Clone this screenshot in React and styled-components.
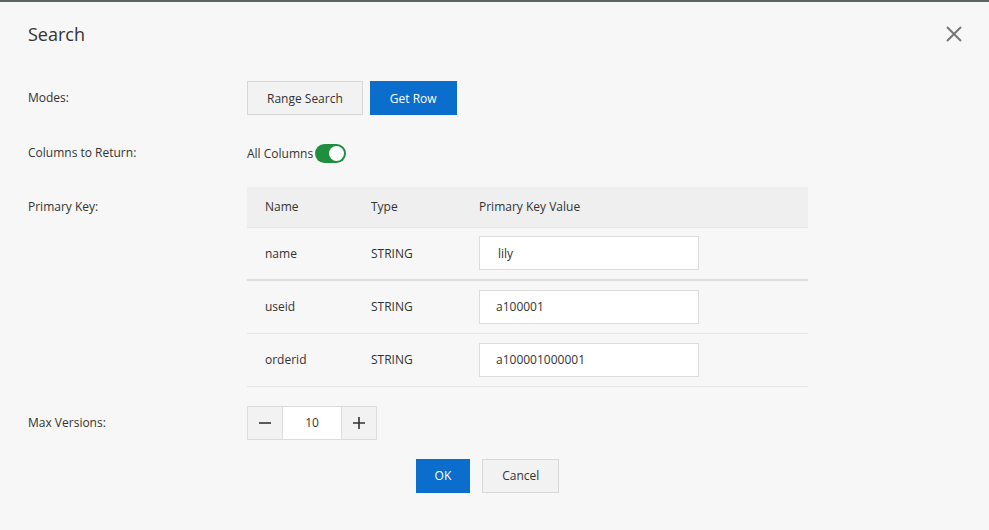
import React, { useState } from 'react';
import styled, { createGlobalStyle } from 'styled-components';

const GlobalStyle = createGlobalStyle`
  html, body {
    margin: 0;
    padding: 0;
    background: #f7f7f7;
    font-family: "Open Sans", "Noto Sans", sans-serif;
    font-size: 12px;
    color: #333;
  }
  * { box-sizing: border-box; }
`;

const rows = [
  { name: 'name', type: 'STRING', value: 'lily' },
  { name: 'useid', type: 'STRING', value: 'a100001' },
  { name: 'orderid', type: 'STRING', value: 'a100001000001' },
];

const App = () => {
  const [mode, setMode] = useState('get');
  const [allColumns, setAllColumns] = useState(true);
  const [versions, setVersions] = useState(10);

  return (
    <>
      <GlobalStyle />
      <Dialog>
        <Header>
          <Title>Search</Title>
          <Close aria-label="close">
            <svg width="18" height="18" viewBox="0 0 18 18">
              <path d="M2 2 L16 16 M16 2 L2 16" stroke="#777" strokeWidth="2" fill="none" />
            </svg>
          </Close>
        </Header>

        <Form>
          <FormRow $mt={0}>
            <Label>Modes:</Label>
            <Modes>
              <ModeButton $active={mode === 'range'} onClick={() => setMode('range')}>Range Search</ModeButton>
              <ModeButton $active={mode === 'get'} onClick={() => setMode('get')}>Get Row</ModeButton>
            </Modes>
          </FormRow>

          <FormRow $mt={21}>
            <Label>Columns to Return:</Label>
            <SwitchRow>
              All Columns
              <Switch $on={allColumns} onClick={() => setAllColumns(!allColumns)}>
                <Knob $on={allColumns} />
              </Switch>
            </SwitchRow>
          </FormRow>

          <FormRow $mt={17}>
            <Label $lh={40}>Primary Key:</Label>
            <Table>
              <thead>
                <tr>
                  <Th $w={106}>Name</Th>
                  <Th $w={108}>Type</Th>
                  <Th>Primary Key Value</Th>
                </tr>
              </thead>
              <tbody>
                {rows.map((r, i) => (
                  <Tr key={r.name} $thick={i === 0}>
                    <Td>{r.name}</Td>
                    <Td>{r.type}</Td>
                    <Td>
                      <ValueInput defaultValue={r.value} $first={i === 0} />
                    </Td>
                  </Tr>
                ))}
              </tbody>
            </Table>
          </FormRow>

          <FormRow $mt={19}>
            <Label>Max Versions:</Label>
            <Stepper>
              <StepButton onClick={() => setVersions(versions - 1)}>
                <svg width="14" height="14" viewBox="0 0 14 14">
                  <path d="M1 7 H13" stroke="#333" strokeWidth="1.6" />
                </svg>
              </StepButton>
              <StepValue value={versions} onChange={(e) => setVersions(e.target.value)} />
              <StepButton onClick={() => setVersions(versions + 1)}>
                <svg width="14" height="14" viewBox="0 0 14 14">
                  <path d="M1 7 H13 M7 1 V13" stroke="#333" strokeWidth="1.6" />
                </svg>
              </StepButton>
            </Stepper>
          </FormRow>
        </Form>

        <Footer>
          <FooterButton $primary>OK</FooterButton>
          <FooterButton>Cancel</FooterButton>
        </Footer>
      </Dialog>
    </>
  );
};

export default App;

const Dialog = styled.div`
  width: 989px;
  height: 530px;
  background: #f7f7f7;
  border-top: 2px solid #5e6661;
`;

const Header = styled.div`
  display: flex;
  justify-content: space-between;
  align-items: flex-start;
  padding: 20px 26px 0 28px;
  height: 62px;
`;

const Title = styled.h2`
  margin: 0;
  font-weight: 400;
  font-size: 18px;
  line-height: 24px;
  color: #333;
`;

const Close = styled.div`
  width: 18px;
  height: 18px;
  margin-top: 3px;
  cursor: pointer;
`;

const Form = styled.div`
  display: flex;
  flex-direction: column;
  padding: 17px 0 0 28px;
`;

const FormRow = styled.div`
  display: grid;
  grid-template-columns: 219px 561px;
  align-items: start;
  margin-top: ${(p) => p.$mt}px;
`;

const Label = styled.div`
  line-height: ${(p) => p.$lh || 34}px;
  color: #333;
`;

const Modes = styled.div`
  display: flex;
  gap: 7px;
`;

const ModeButton = styled.button`
  height: 34px;
  padding: 0 19px;
  font-family: inherit;
  font-size: 12px;
  border: 1px solid ${(p) => (p.$active ? '#0b6ecc' : '#d7d7d7')};
  background: ${(p) => (p.$active ? '#0b6ecc' : '#f2f2f2')};
  color: ${(p) => (p.$active ? '#fff' : '#333')};
  cursor: pointer;
`;

const SwitchRow = styled.div`
  display: flex;
  align-items: center;
  height: 34px;
  color: #333;
`;

const Switch = styled.div`
  position: relative;
  width: 31px;
  height: 19px;
  margin-left: 2px;
  border-radius: 10px;
  background: ${(p) => (p.$on ? '#1f8f3f' : '#ccc')};
  cursor: pointer;
`;

const Knob = styled.div`
  position: absolute;
  top: 2px;
  left: ${(p) => (p.$on ? '14px' : '2px')};
  width: 15px;
  height: 15px;
  border-radius: 50%;
  background: #fff;
`;

const Table = styled.table`
  width: 561px;
  border-collapse: collapse;
`;

const Th = styled.th`
  height: 40px;
  padding: 0 0 0 18px;
  width: ${(p) => (p.$w ? `${p.$w}px` : 'auto')};
  text-align: left;
  font-weight: 400;
  background: #efefef;
  color: #333;
  border-bottom: 1px solid #e4e4e4;
`;

const Tr = styled.tr`
  border-bottom: ${(p) => (p.$thick ? '2px solid #dedede' : '1px solid #e4e4e4')};
`;

const Td = styled.td`
  height: 53px;
  padding: 0 0 0 18px;
  color: #333;
`;

const ValueInput = styled.input`
  width: 220px;
  height: 34px;
  padding: 0 ${(p) => (p.$first ? 18 : 16)}px;
  border: 1px solid #dcdcdc;
  background: #fff;
  font-family: inherit;
  font-size: 12px;
  color: #333;
  outline: none;
`;

const Stepper = styled.div`
  display: flex;
  width: 130px;
  height: 34px;
  border: 1px solid #dcdcdc;
`;

const StepButton = styled.div`
  width: 34px;
  display: flex;
  align-items: center;
  justify-content: center;
  background: #f2f2f2;
  cursor: pointer;
`;

const StepValue = styled.input`
  width: 60px;
  border: none;
  border-left: 1px solid #dcdcdc;
  border-right: 1px solid #dcdcdc;
  background: #fff;
  text-align: center;
  font-family: inherit;
  font-size: 12px;
  color: #333;
  outline: none;
`;

const Footer = styled.div`
  display: flex;
  justify-content: center;
  gap: 12px;
  padding: 19px 14px 0 0;
`;

const FooterButton = styled.button`
  height: 34px;
  padding: 0 ${(p) => (p.$primary ? 18 : 19)}px;
  font-family: inherit;
  font-size: 12px;
  border: 1px solid ${(p) => (p.$primary ? '#0b6ecc' : '#d7d7d7')};
  background: ${(p) => (p.$primary ? '#0b6ecc' : '#f2f2f2')};
  color: ${(p) => (p.$primary ? '#fff' : '#333')};
  cursor: pointer;
`;
